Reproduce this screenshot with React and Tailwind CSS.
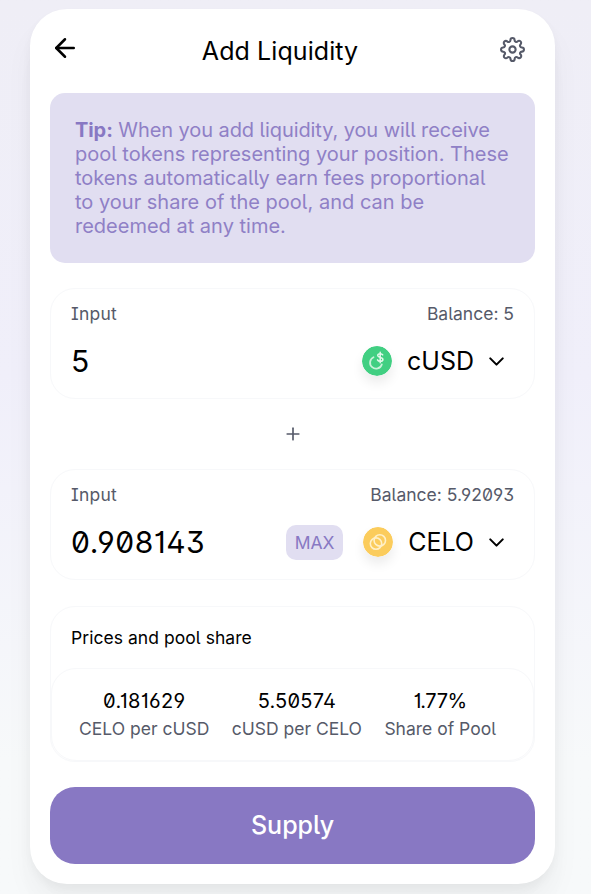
import { FiArrowLeft, FiChevronDown, FiPlus, FiSettings } from "react-icons/fi";

function CusdIcon() {
  return (
    <svg viewBox="0 0 30 30" className="size-[30px] rounded-full shadow-[0_7px_12px_rgba(0,0,0,0.08)]">
      <circle cx="15" cy="15" r="15" fill="#41cf82" />
      <path d="M11.5 11.2A6 6 0 1 0 19.8 18.4" fill="none" stroke="#c9f1da" strokeWidth="1.8" strokeLinecap="round" />
      <path
        d="M20.7 8.9C20.2 8 19.2 7.7 18.2 7.7c-1.4 0-2.5.6-2.5 1.8 0 2.6 5.2 1.2 5.2 3.9 0 1.2-1.2 1.9-2.6 1.9-1.2 0-2.3-.5-2.8-1.5M18.2 6.2v10.5"
        fill="none"
        stroke="#e2f8eb"
        strokeWidth="1.5"
        strokeLinecap="round"
      />
    </svg>
  );
}

function CeloIcon() {
  return (
    <svg viewBox="0 0 30 30" className="size-[30px] rounded-full shadow-[0_7px_12px_rgba(0,0,0,0.08)]">
      <circle cx="15" cy="15" r="15" fill="#fbcc5c" />
      <g fill="none" stroke="#fff0c8" strokeWidth="1.6">
        <circle cx="13" cy="16.6" r="5.7" />
        <circle cx="16.8" cy="13.4" r="5.7" />
      </g>
    </svg>
  );
}

function TokenPanel({ balance, value, symbol, icon, max }) {
  return (
    <section className="h-[111px] rounded-[25px] border border-[#f7f8fa] pr-5 pl-5">
      <div className="flex h-[48px] items-center justify-between pt-[2px] text-[17.5px] text-[#565a69]">
        <span className="tracking-[0.25px]">Input</span>
        <span>Balance: {balance}</span>
      </div>
      <div className="flex h-[48px] items-center">
        <span className="flex-1 text-[30px] leading-none tracking-[0.5px]">{value}</span>
        {max && (
          <button className="mr-5 h-[35px] w-[57px] rounded-[10px] bg-[#e1def1] pt-[2px] text-[17.5px] text-[#8878c3]">
            MAX
          </button>
        )}
        <button className="flex items-center pr-[5px]">
          {icon}
          <span className="ml-[15px] text-[25px] leading-none">{symbol}</span>
          <FiChevronDown className="ml-[10px] size-[25px]" />
        </button>
      </div>
    </section>
  );
}

function Stat({ value, label, tracking }) {
  return (
    <div className="flex flex-col items-center">
      <span className={`text-[20px] leading-[28px] ${tracking}`}>{value}</span>
      <span className="text-[17.5px] leading-[28px] whitespace-nowrap text-[#565a69]">{label}</span>
    </div>
  );
}

export default function App() {
  return (
    <div className="h-[894px] overflow-hidden bg-linear-to-b from-[#efeef6] via-[#f0effa] via-42% to-[#f7f9fa] to-85% px-[30px] pt-[9px] font-['Inter',sans-serif] text-black [font-feature-settings:'ss01','ss02','cv01','cv03']">
      <main className="h-[875px] w-[525px] rounded-[37px] bg-white px-5 shadow-[0_0_1px_rgba(0,0,0,0.01),0_5px_10px_rgba(0,0,0,0.04),0_20px_30px_rgba(0,0,0,0.04),0_30px_40px_rgba(0,0,0,0.01)]">
        <header className="flex h-[84px] items-center justify-between pr-[10px]">
          <FiArrowLeft className="-mt-[6px] size-[30px]" />
          <h1 className="mt-px mr-[20px] text-[25px] leading-none tracking-[0.08px]">Add Liquidity</h1>
          <FiSettings className="-mt-[3px] size-[25px] text-[#565a69]" />
        </header>

        <p className="h-[170px] rounded-[15px] bg-[#e1def1] py-[25px] pl-[25px] text-[20px] leading-[24px] font-normal whitespace-nowrap text-[#8f80c6]">
          <span className="tracking-[-0.08px]">
            <b className="font-bold text-[#8878c3]">Tip:</b> When you add liquidity, you will receive
          </span>
          <br />
          pool tokens representing your position. These
          <br />
          tokens automatically earn fees proportional
          <br />
          to your share of the pool, and can be
          <br />
          redeemed at any time.
        </p>

        <div className="mt-[25px]">
          <TokenPanel balance="5" value="5" symbol="cUSD" icon={<CusdIcon />} />
          <div className="flex h-[70px] items-center justify-center">
            <FiPlus className="size-5 text-[#565a69]" />
          </div>
          <TokenPanel balance="5.92093" value="0.908143" symbol="CELO" icon={<CeloIcon />} max />
        </div>

        <section className="mt-[26px] h-[156px] rounded-[25px] border border-[#f7f8fa]">
          <h2 className="flex h-[61px] items-center px-5 pt-[2px] text-[17.5px] tracking-[0.05px]">
            Prices and pool share
          </h2>
          <div className="flex h-[93px] justify-between rounded-[25px] border border-[#f7f8fa] pt-[18px] pr-[37px] pl-[27px]">
            <Stat value="0.181629" label="CELO per cUSD" tracking="tracking-[0.3px]" />
            <Stat value="5.50574" label="cUSD per CELO" tracking="tracking-[0.2px]" />
            <Stat value="1.77%" label="Share of Pool" tracking="tracking-[-0.4px]" />
          </div>
        </section>

        <button className="mt-[25px] h-[77px] w-full rounded-[25px] bg-[#8878c3] text-[25px] font-medium text-white">
          Supply
        </button>
      </main>
    </div>
  );
}
